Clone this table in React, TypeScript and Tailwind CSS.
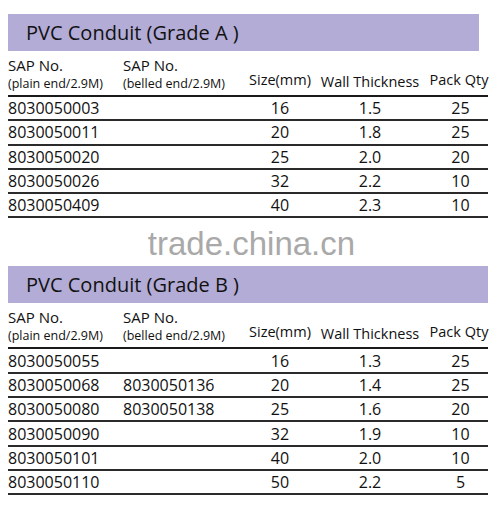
import React from "react";

type Row = [string, string, string, string, string];

const gradeA: Row[] = [
  ["8030050003", "", "16", "1.5", "25"],
  ["8030050011", "", "20", "1.8", "25"],
  ["8030050020", "", "25", "2.0", "20"],
  ["8030050026", "", "32", "2.2", "10"],
  ["8030050409", "", "40", "2.3", "10"],
];

const gradeB: Row[] = [
  ["8030050055", "", "16", "1.3", "25"],
  ["8030050068", "8030050136", "20", "1.4", "25"],
  ["8030050080", "8030050138", "25", "1.6", "20"],
  ["8030050090", "", "32", "1.9", "10"],
  ["8030050101", "", "40", "2.0", "10"],
  ["8030050110", "", "50", "2.2", "5"],
];

const cols = "grid grid-cols-[115px_117px_80px_100px_68px]";

function Table({ title, rows, bandW }: { title: string; rows: Row[]; bandW: string }) {
  return (
    <div className="ml-[8px] w-[480px]">
      <div className={`${bandW} h-[37px] bg-[#b3acd6] flex items-center pl-[18px] text-[20px] text-[#111] leading-none`}>
        {title}
      </div>
      <div className={`${cols} h-[46px] border-b-2 border-[#1a1a1a] text-[#111]`}>
        <div className="flex flex-col pt-[7px]">
          <span className="text-[15px] leading-[15px]">SAP No.</span>
          <span className="text-[12.5px] leading-[13px] mt-[4px]">(plain end/2.9M)</span>
        </div>
        <div className="flex flex-col pt-[7px]">
          <span className="text-[15px] leading-[15px]">SAP No.</span>
          <span className="text-[12.5px] leading-[13px] mt-[4px]">(belled end/2.9M)</span>
        </div>
        <div className="flex items-end justify-center pb-[8px] text-[14.5px] leading-none">Size(mm)</div>
        <div className="flex items-end justify-center pb-[6px] text-[14.5px] leading-none">Wall Thickness</div>
        <div className="flex items-end justify-center pb-[8px] pl-[10px] text-[14.5px] leading-none whitespace-nowrap">Pack Qty</div>
      </div>
      {rows.map((r, i) => (
        <div key={i} className={`${cols} h-[24.3px] border-b-2 border-[#2a2a2a] text-[16px] text-[#111] leading-none items-center`}>
          <div>{r[0]}</div>
          <div>{r[1]}</div>
          <div className="text-center">{r[2]}</div>
          <div className="text-center">{r[3]}</div>
          <div className="text-center pl-[13px]">{r[4]}</div>
        </div>
      ))}
    </div>
  );
}

export default function App() {
  return (
    <div className="w-[503px] h-[509px] bg-white overflow-hidden pt-[14px]" style={{ fontFamily: '"Open Sans", "Noto Sans", sans-serif' }}>
      <Table title="PVC Conduit (Grade A )" rows={gradeA} bandW="w-[471px]" />
      <div className="h-[48px] flex items-center justify-center">
        <span className="text-[33px] leading-none text-[#a9a9a9] mt-[2px]" style={{ fontFamily: '"Liberation Sans", Arial, sans-serif' }}>
          trade.china.cn
        </span>
      </div>
      <Table title="PVC Conduit (Grade B )" rows={gradeB} bandW="w-[480px]" />
    </div>
  );
}
